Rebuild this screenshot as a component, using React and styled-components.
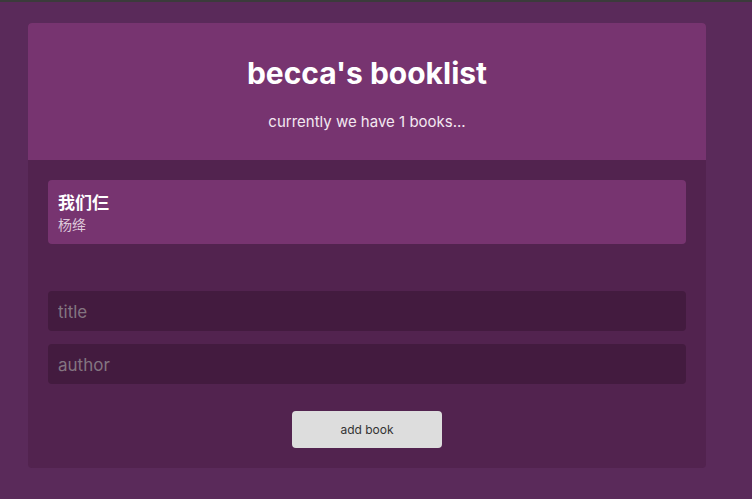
import styled, { createGlobalStyle } from 'styled-components'

const GlobalStyle = createGlobalStyle`
  html, body {
    margin: 0;
    padding: 0;
    background: #5a2a5a;
    font-family: Inter, "Noto Sans CJK SC", sans-serif;
  }
`

const Page = styled.div`
  min-height: 499px;
  box-sizing: border-box;
  border-top: 2px solid #3b3b3b;
  padding: 21px 46px 32px 28px;
`

const Card = styled.div`
  border-radius: 4px;
  overflow: hidden;
  background: #52234f;
`

const Header = styled.header`
  background: #773470;
  height: 137px;
  box-sizing: border-box;
  padding-top: 31px;
  text-align: center;
  color: #fff;
`

const Title = styled.h1`
  margin: 0;
  font-size: 30px;
  font-weight: 700;
  line-height: 38px;
`

const Subtitle = styled.p`
  margin: 20px 0 0;
  font-size: 15px;
  line-height: 20px;
  color: #f3e8f1;
`

const Body = styled.div`
  padding: 20px 20px 20px;
`

const BookList = styled.ul`
  list-style: none;
  margin: 0 0 47px;
  padding: 0;
`

const BookItem = styled.li`
  background: #773470;
  border-radius: 4px;
  height: 64px;
  box-sizing: border-box;
  padding: 12px 10px;
  color: #fff;
`

const BookTitle = styled.h3`
  margin: 0;
  font-size: 17px;
  font-weight: 700;
  line-height: 22px;
`

const BookAuthor = styled.p`
  margin: 1px 0 0;
  font-size: 14px;
  line-height: 20px;
  color: #ddc8da;
`

const Form = styled.form`
  display: flex;
  flex-direction: column;
  gap: 13px;
`

const Input = styled.input`
  height: 40px;
  box-sizing: border-box;
  border: none;
  border-radius: 4px;
  background: #431b3f;
  padding: 2px 10px 0;
  font-family: Inter, sans-serif;
  font-size: 17px;
  color: #fff;
  outline: none;
  &::placeholder {
    color: #837581;
  }
`

const Button = styled.button`
  align-self: center;
  margin-top: 14px;
  width: 150px;
  height: 37px;
  border: none;
  border-radius: 4px;
  background: #dddddd;
  color: #333;
  font-family: Inter, sans-serif;
  font-size: 12px;
`

export default function App() {
  const books = [{ id: 1, title: '我们仨', author: '杨绛' }]

  return (
    <>
      <GlobalStyle />
      <Page>
        <Card>
          <Header>
            <Title>becca's booklist</Title>
            <Subtitle>currently we have {books.length} books...</Subtitle>
          </Header>
          <Body>
            <BookList>
              {books.map(book => (
                <BookItem key={book.id}>
                  <BookTitle>{book.title}</BookTitle>
                  <BookAuthor>{book.author}</BookAuthor>
                </BookItem>
              ))}
            </BookList>
            <Form onSubmit={e => e.preventDefault()}>
              <Input placeholder="title" />
              <Input placeholder="author" />
              <Button type="submit">add book</Button>
            </Form>
          </Body>
        </Card>
      </Page>
    </>
  )
}
